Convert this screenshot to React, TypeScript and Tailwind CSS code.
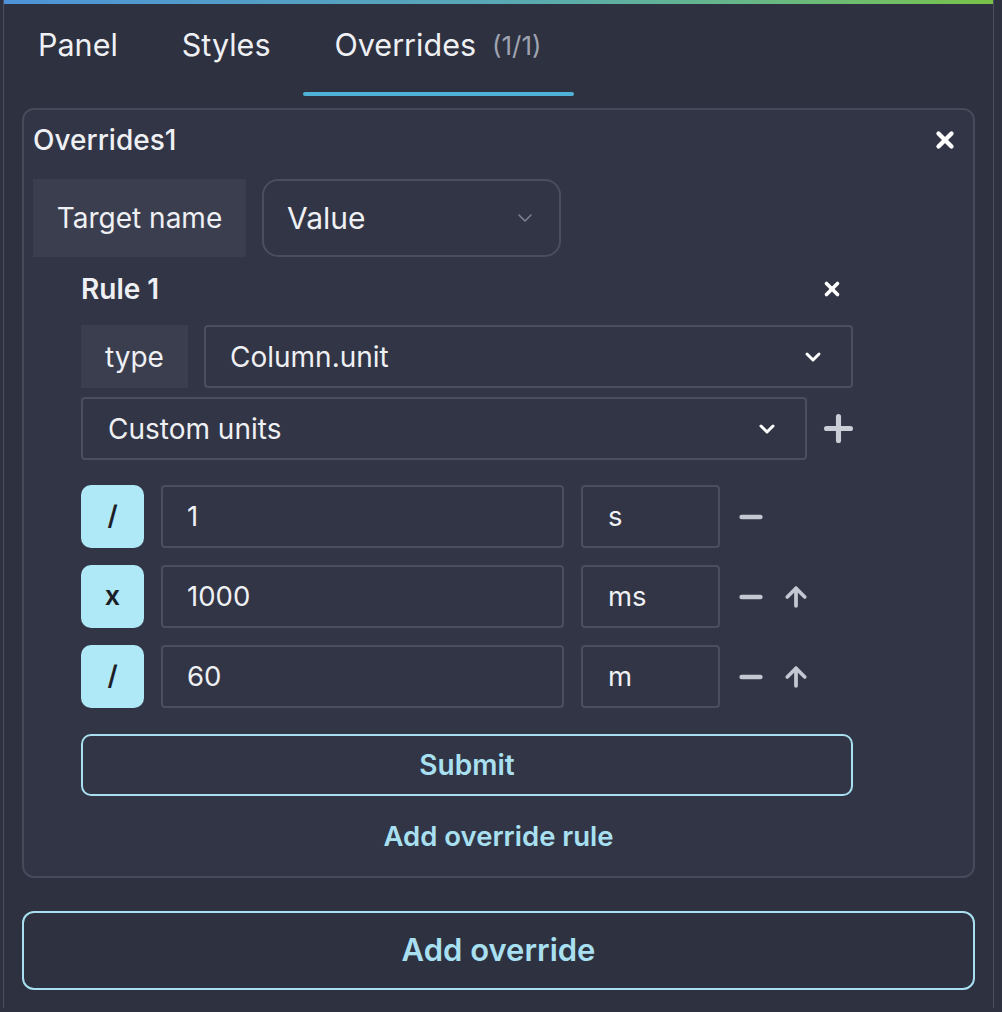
import { X, ChevronDown, Plus, Minus, ArrowUp } from 'lucide-react';

const units = [
    { op: '/', value: '1', unit: 's', up: false },
    { op: 'x', value: '1000', unit: 'ms', up: true },
    { op: '/', value: '60', unit: 'm', up: true },
];

function Tab({ label, active, count, first }: { label: string; active?: boolean; count?: string; first?: boolean }) {
    return (
        <div className={`relative flex h-[91px] items-center pb-[9px] pr-[32px] ${first ? 'pl-[34px]' : 'pl-[32px]'}`}>
            <span className="text-[30.5px] text-[#eef0f4]">{label}</span>
            {count && <span className="ml-[16px] text-[26px] text-[#9ea3b0]">{count}</span>}
            {active && <div className="absolute bottom-[-1px] left-0 right-0 h-[4px] rounded-full bg-[#4fb1d6]" />}
        </div>
    );
}

export default function App() {
    return (
        <div
            className="min-h-[1012px] w-[1002px] bg-[#2e3140] text-[#eef0f4]"
            style={{ fontFamily: 'Inter, "Noto Sans", sans-serif' }}
        >
            <div className="ml-[3px] min-h-[1008px] w-[991px] border-x border-[#4a4e5d]">
                <div className="h-[4px] w-full bg-gradient-to-r from-[#4e93d8] via-[#58a8b5] to-[#78c346]" />
                <div className="flex">
                    <Tab label="Panel" first />
                    <Tab label="Styles" />
                    <Tab label="Overrides" count="(1/1)" active />
                </div>

                <div className="mx-[18px] mt-[13px] rounded-[12px] border-2 border-[#464a5a] bg-[#323545] px-[9px] pb-[18px] pt-[8px]">
                    <div className="flex h-[44px] items-center justify-between">
                        <span className="text-[28px] font-medium">Overrides1</span>
                        <button className="mr-[4px] flex h-[30px] w-[30px] items-center justify-center text-white">
                            <X size={26} strokeWidth={4} />
                        </button>
                    </div>

                    <div className="mt-[17px] flex gap-[16px]">
                        <div className="flex h-[78px] w-[213px] items-center justify-center bg-[#3b3e4f] text-[28px]">
                            Target name
                        </div>
                        <div className="flex h-[78px] w-[299px] items-center justify-between rounded-[16px] border-2 border-[#4a4e5d] pl-[23px] pr-[22px]">
                            <span className="text-[30px]">Value</span>
                            <ChevronDown size={24} strokeWidth={1.5} className="text-[#7f8493]" />
                        </div>
                    </div>

                    <div className="ml-[48px] w-[772px]">
                        <div className="mt-[13px] flex h-[38px] items-center justify-between">
                            <span className="text-[28px] font-semibold">Rule 1</span>
                            <X size={22} strokeWidth={4} className="mr-[10px] text-white" />
                        </div>

                        <div className="mt-[17px] flex gap-[16px]">
                            <div className="flex h-[63px] w-[107px] items-center justify-center bg-[#3b3e4f] text-[28px]">
                                type
                            </div>
                            <div className="flex h-[63px] flex-1 items-center justify-between rounded-[4px] border-2 border-[#4a4e5d] pl-[24px] pr-[26px]">
                                <span className="text-[28px]">Column.unit</span>
                                <ChevronDown size={24} strokeWidth={3} className="text-white" />
                            </div>
                        </div>

                        <div className="mt-[9px] flex items-center gap-[11px]">
                            <div className="flex h-[63px] w-[726px] shrink-0 items-center justify-between rounded-[4px] border-2 border-[#4a4e5d] pl-[25px] pr-[26px]">
                                <span className="text-[28px]">Custom units</span>
                                <ChevronDown size={24} strokeWidth={3} className="text-white" />
                            </div>
                            <Plus size={41} strokeWidth={3} className="shrink-0 text-[#c9cdd6]" />
                        </div>

                        <div className="mt-[25px] flex flex-col gap-[17px]">
                            {units.map((u, i) => (
                                <div key={i} className="flex items-center">
                                    <div className="flex h-[63px] w-[63px] items-center justify-center rounded-[10px] bg-[#afe8f6] text-[27px] font-semibold text-[#1c1f28]">
                                        {u.op}
                                    </div>
                                    <div className="ml-[17px] flex h-[63px] w-[403px] items-center rounded-[4px] border-2 border-[#4a4e5d] pl-[24px] text-[27.5px]">
                                        {u.value}
                                    </div>
                                    <div className="ml-[17px] flex h-[63px] w-[139px] items-center rounded-[4px] border-2 border-[#4a4e5d] pl-[25px] text-[27.5px]">
                                        {u.unit}
                                    </div>
                                    <Minus size={32} strokeWidth={3.5} className="ml-[15px] text-[#c3c7d1]" />
                                    {u.up && (
                                        <ArrowUp size={30} strokeWidth={3} className="ml-[14px] text-[#c3c7d1]" />
                                    )}
                                </div>
                            ))}
                        </div>

                        <button className="mt-[26px] flex h-[62px] w-full items-center justify-center rounded-[10px] border-2 border-[#a8e0f1] text-[28px] font-semibold text-[#a8e0f1]">
                            Submit
                        </button>
                    </div>

                    <div className="mt-[20px] flex h-[42px] items-center justify-center text-[27.5px] font-semibold text-[#a8e0f1]">
                        Add override rule
                    </div>
                </div>

                <button className="mx-[18px] mt-[33px] flex h-[79px] w-[953px] items-center justify-center rounded-[12px] border-2 border-[#a8e0f1] text-[31px] font-semibold text-[#a8e0f1]">
                    Add override
                </button>
            </div>
        </div>
    );
}
